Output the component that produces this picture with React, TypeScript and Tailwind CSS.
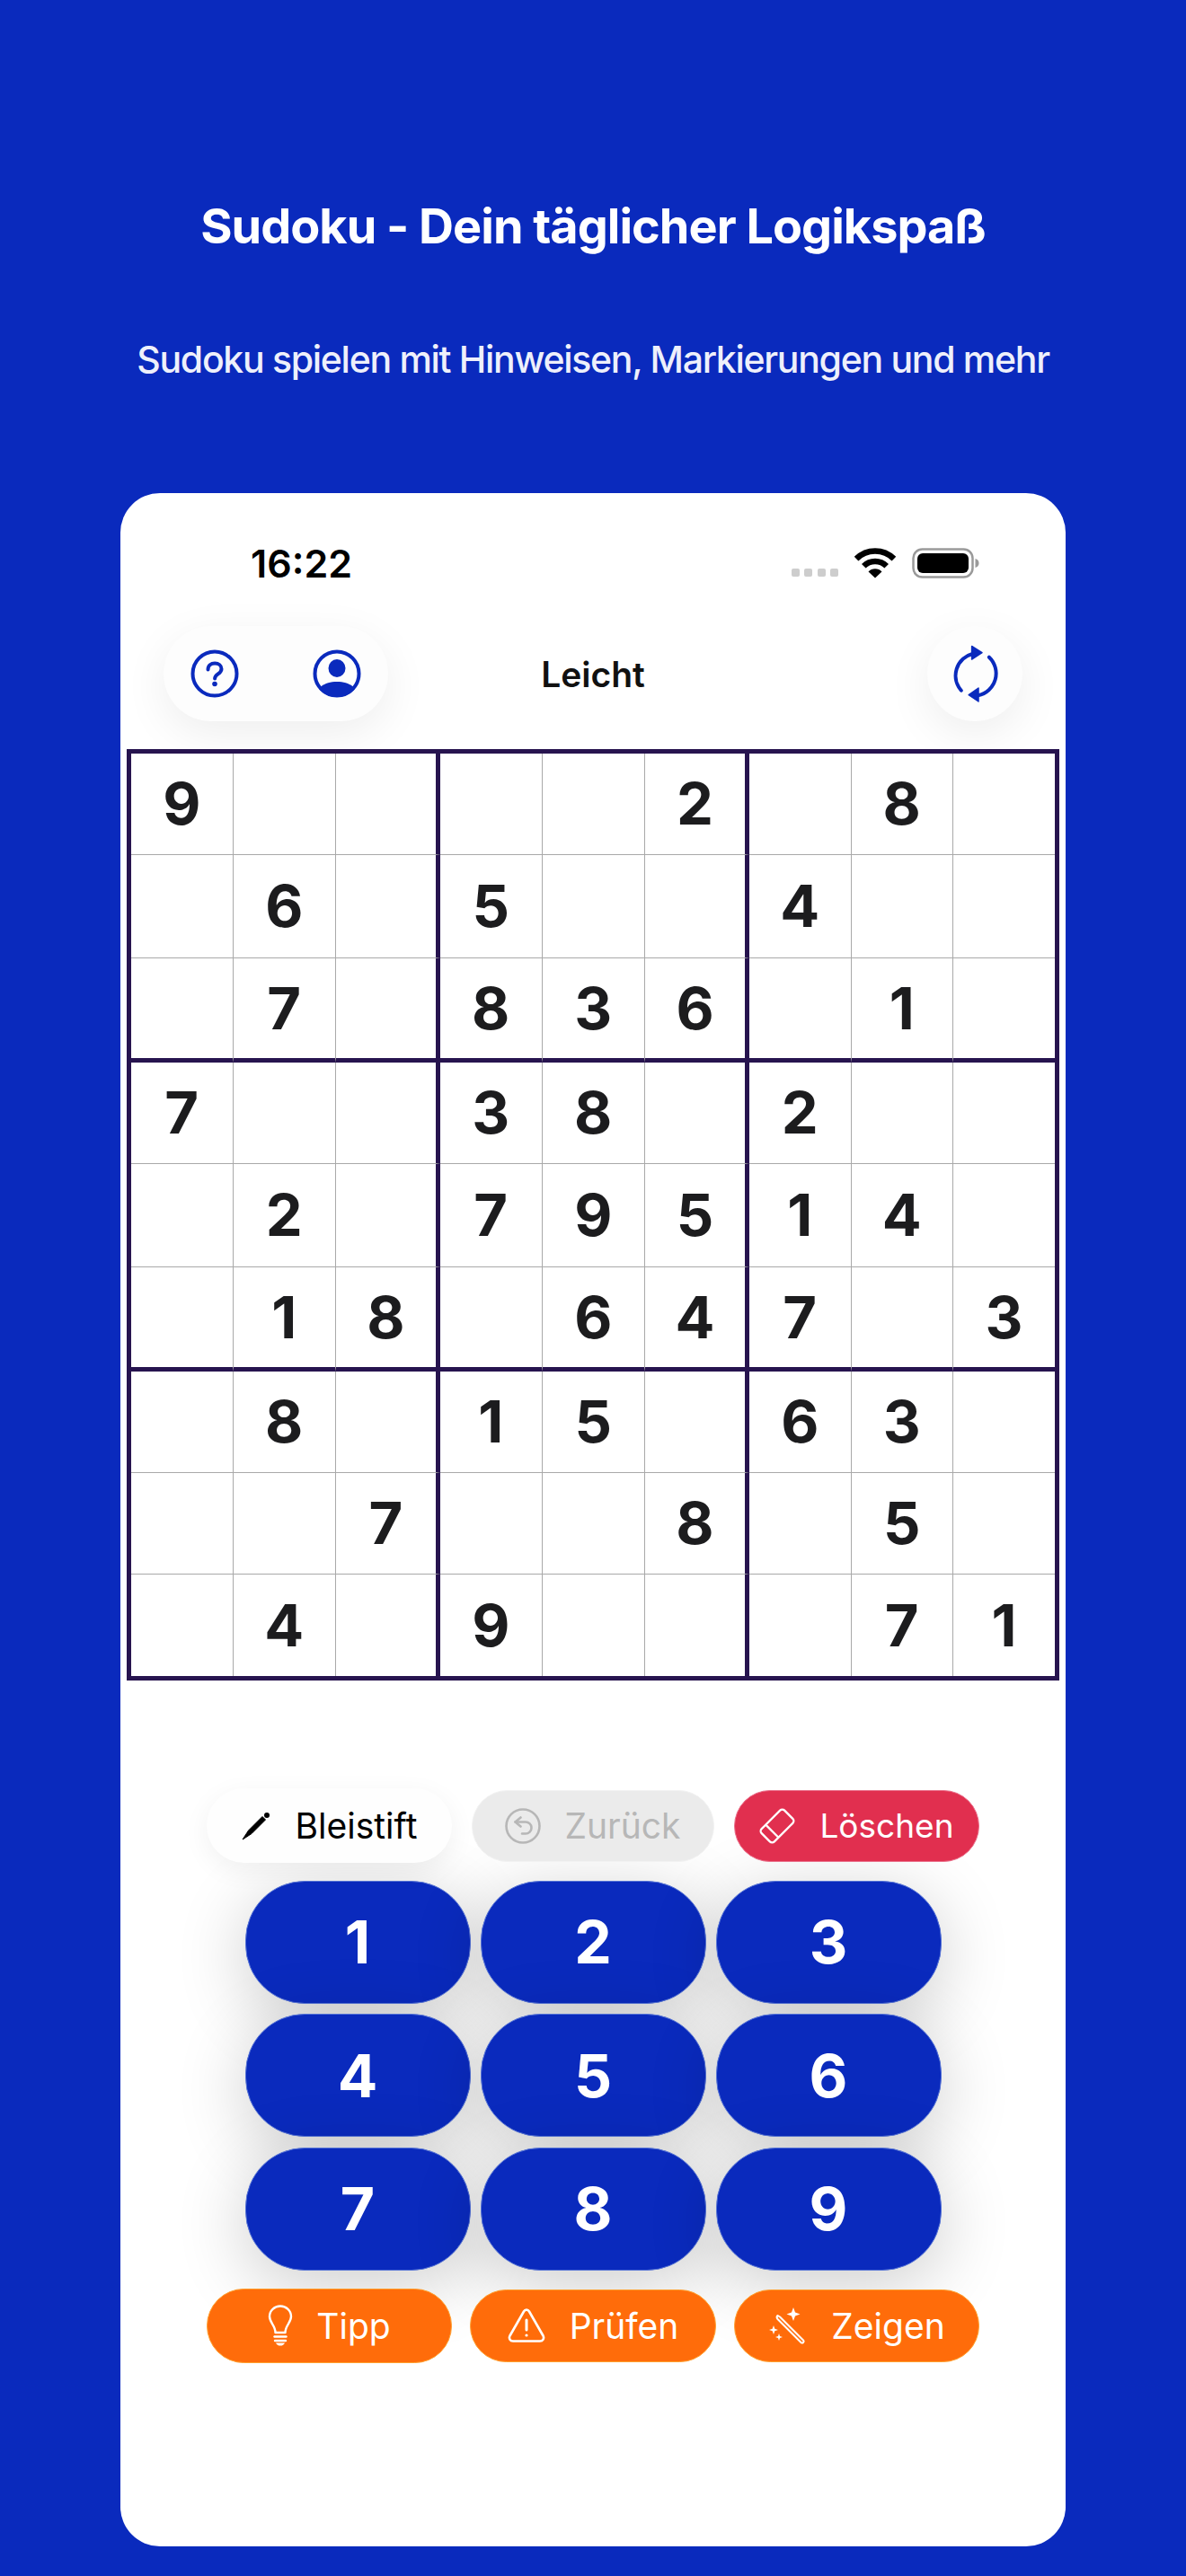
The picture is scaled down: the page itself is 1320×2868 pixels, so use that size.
import React from "react";

const BOARD = [
  "9....2.8.",
  ".6.5..4..",
  ".7.836.1.",
  "7..38.2..",
  ".2.79514.",
  ".18.647.3",
  ".8.15.63.",
  "..7..8.5.",
  ".4.9...71",
];

function HelpIcon() {
  return (
    <svg width="54" height="54" viewBox="0 0 54 54" fill="none">
      <circle cx="27" cy="27" r="24.5" stroke="#0a2abd" strokeWidth="4" />
      <path d="M19.500 22.500c0-4.500 3.400-7 7.600-7 4.200 0 7.400 2.600 7.400 6.200 0 5.800-7.400 5.600-7.400 10.800" stroke="#0a2abd" strokeWidth="4" strokeLinecap="round" />
      <circle cx="27" cy="38.500" r="2.800" fill="#0a2abd" />
    </svg>
  );
}

function UserIcon() {
  return (
    <svg width="54" height="54" viewBox="0 0 54 54" fill="none">
      <circle cx="27" cy="27" r="24.500" stroke="#0a2abd" strokeWidth="4" />
      <ellipse cx="27" cy="21" rx="9.500" ry="10" fill="#0a2abd" />
      <path d="M7 44c3-5 11-8 20-8s17 3 20 8c-5 6-12 9-20 9s-15-3-20-9z" fill="#0a2abd" />
    </svg>
  );
}

function RefreshIcon() {
  return (
    <svg width="62" height="66" viewBox="-31 -33 62 66" fill="none">
      <path d="M-15.200 18.700A25 25 0 0 1 -2.700 -22" stroke="#0a2abd" strokeWidth="4" strokeLinecap="round" />
      <path d="M-3.400 -30.500L8 -23.300L-3.400 -16Z" fill="#0a2abd" stroke="#0a2abd" strokeWidth="1.500" strokeLinejoin="round" />
      <path d="M15.900 -18.300A25 25 0 0 1 3.500 24.300" stroke="#0a2abd" strokeWidth="4" strokeLinecap="round" />
      <path d="M4 16L-6.800 23.700L4 31Z" fill="#0a2abd" stroke="#0a2abd" strokeWidth="1.500" strokeLinejoin="round" />
    </svg>
  );
}

function WifiIcon() {
  return (
    <svg width="46" height="34" viewBox="0 0 46 34" fill="none">
      <path d="M2.100 12.100A29.500 29.500 0 0 1 43.900 12.100" stroke="#000" strokeWidth="6.500" />
      <path d="M10.300 20.300A18 18 0 0 1 35.700 20.300" stroke="#000" strokeWidth="6.500" />
      <path d="M23 33.500L15.500 26.500A10.500 10.500 0 0 1 30.500 26.500Z" fill="#000" />
    </svg>
  );
}

function BatteryIcon() {
  return (
    <svg width="75" height="34" viewBox="0 0 75 34" fill="none">
      <rect x="1.500" y="1.500" width="66" height="31" rx="10" stroke="#9a9a9a" strokeWidth="2.500" />
      <rect x="6" y="6" width="57" height="22" rx="6" fill="#000" />
      <path d="M70.500 12c2.600.6 4 2.600 4 5s-1.400 4.400-4 5z" fill="#9a9a9a" />
    </svg>
  );
}

function PencilIcon() {
  return (
    <svg width="32" height="32" viewBox="0 0 32 32" fill="none">
      <path d="M7.500 21L23 5.500L26.500 9L11 24.500L1 31Z" fill="#000" stroke="#000" strokeWidth="1" strokeLinejoin="round" />
      <circle cx="28" cy="4" r="3" fill="#000" />
    </svg>
  );
}

function UndoIcon() {
  return (
    <svg width="40" height="40" viewBox="0 0 40 40" fill="none" stroke="#b7b7b7" strokeWidth="2.600" strokeLinecap="round" strokeLinejoin="round">
      <circle cx="20" cy="20" r="18.500" />
      <path d="M17.500 10.500L11.500 15.500L17.500 20.500" />
      <path d="M11.500 15.500H23a6.500 6.500 0 0 1 0 13H19" />
    </svg>
  );
}

function EraserIcon() {
  return (
    <svg width="40" height="40" viewBox="0 0 40 40" fill="none" stroke="#fff" strokeWidth="2.300">
      <g transform="rotate(-45 20 20)">
        <rect x="2" y="10" width="36" height="20" rx="3.500" />
        <path d="M12 10V30" />
      </g>
    </svg>
  );
}

function BulbIcon() {
  return (
    <svg width="28" height="46" viewBox="0 0 28 46" fill="none" stroke="#fff" strokeWidth="2.400" strokeLinecap="round">
      <path d="M8.500 31C8.500 23 2 20 2 13C2 6.500 7.500 1.500 14 1.500S26 6.500 26 13C26 20 19.500 23 19.500 31Z" strokeLinejoin="round" />
      <path d="M7.500 35.500H20.500" />
      <path d="M8 40H20" />
      <path d="M9 42.500H19C18.200 44.600 16.400 45.600 14 45.600S9.800 44.600 9 42.500Z" fill="#fff" strokeWidth="0" />
    </svg>
  );
}

function WarnIcon() {
  return (
    <svg width="42" height="38" viewBox="0 0 42 38" fill="none" stroke="#fff" strokeWidth="2.600" strokeLinecap="round" strokeLinejoin="round">
      <path d="M18 3.500C19.400 1 22.600 1 24 3.500L39.500 30.500C41 33.300 39.300 36.500 36 36.500H6C2.700 36.500 1 33.300 2.500 30.500Z" />
      <path d="M21 13V24" strokeWidth="3" />
      <circle cx="21" cy="30" r="1.600" fill="#fff" stroke="none" />
    </svg>
  );
}

function WandIcon() {
  return (
    <svg width="41" height="41" viewBox="0 0 41 41" fill="none">
      <path d="M10.500 9L13 10.500L39 36.500C39.800 37.400 39.800 38.300 39 39C38.300 39.800 37.400 39.800 36.500 39L10.500 13C9.500 11.800 9.500 10 10.500 9Z" stroke="#fff" strokeWidth="2" strokeLinejoin="round" />
      <path d="M28 0L30 5.500L35.500 7.500L30 9.500L28 15L26 9.500L20.500 7.500L26 5.500Z" fill="#fff" />
      <path d="M6 20L7.300 23.700L11 25L7.300 26.300L6 30L4.700 26.300L1 25L4.700 23.700Z" fill="#fff" />
      <path d="M12 29L13 32L16 33L13 34L12 37L11 34L8 33L11 32Z" fill="#fff" />
    </svg>
  );
}

function ActionButton({ className, gap, icon, label }: { className: string; gap: string; icon: React.ReactNode; label: string }) {
  return (
    <div className={`relative z-10 flex items-center justify-center rounded-full leading-none ${className}`}>
      <span className={`flex items-center ${gap}`}>
        {icon}
        <span>{label}</span>
      </span>
    </div>
  );
}

function Cell({ value, row, col }: { value: string; row: number; col: number }) {
  const right = col === 8 ? "" : col === 2 || col === 5 ? "border-r-[5px] border-r-[#27144f]" : "border-r-[1.5px] border-r-[#a9a9a9]";
  const bottom = row === 8 ? "" : row === 2 || row === 5 ? "border-b-[5px] border-b-[#27144f]" : "border-b-[1.5px] border-b-[#a9a9a9]";
  return (
    <div className={`flex items-center justify-center text-[65px] font-bold leading-none text-[#1c1c1e] ${right} ${bottom}`}>
      {value === "." ? "" : value}
    </div>
  );
}

export default function App() {
  return (
    <div className="flex h-[2868px] w-[1320px] flex-col items-center overflow-hidden bg-[#0a2abd] font-['Inter',sans-serif] text-white">
      <h1 className="mt-[222px] h-[60px] whitespace-nowrap text-[54px] font-bold leading-[60px] tracking-[-1px]">Sudoku - Dein täglicher Logikspaß</h1>
      <p className="mt-[93px] h-[50px] whitespace-nowrap text-[41px] font-medium leading-[50px] tracking-[-1.3px] text-[#eef0fb]">Sudoku spielen mit Hinweisen, Markierungen und mehr</p>

      <div className="mt-[124px] flex h-[2286px] w-[1052px] flex-col rounded-[44px] bg-white text-black">
        <div className="mt-[50px] flex h-[56px] items-center justify-between pr-[96px] pl-[145px]">
          <span className="text-[43px] font-semibold leading-none">16:22</span>
          <div className="flex items-end gap-[18px]">
            <div className="mb-[2px] flex gap-[5.5px]">
              <div className="h-[9px] w-[9px] rounded-[2px] bg-[#cdcdcd]" />
              <div className="h-[9px] w-[9px] rounded-[2px] bg-[#cdcdcd]" />
              <div className="h-[9px] w-[9px] rounded-[2px] bg-[#cdcdcd]" />
              <div className="h-[9px] w-[9px] rounded-[2px] bg-[#cdcdcd]" />
            </div>
            <WifiIcon />
            <BatteryIcon />
          </div>
        </div>

        <div className="mt-[42px] grid h-[106px] grid-cols-3 items-center px-[48px]">
          <div className="flex h-[106px] w-[250px] items-center justify-between rounded-full bg-[#fdfdfd] px-[30px] shadow-[0_14px_50px_rgba(0,0,0,0.07)]">
            <HelpIcon />
            <UserIcon />
          </div>
          <div className="text-center text-[39px] font-semibold leading-none text-[#111]">Leicht</div>
          <div className="flex h-[106px] w-[106px] items-center justify-center justify-self-end rounded-full bg-[#fdfdfd] shadow-[0_14px_50px_rgba(0,0,0,0.07)]">
            <RefreshIcon />
          </div>
        </div>

        <div className="mt-[30.5px] ml-[7px] grid h-[1037px] w-[1038px] shrink-0 grid-cols-[113.5px_114.5px_116px_113.5px_114.5px_116px_113.5px_113.5px_113px] grid-rows-[113.5px_114.5px_116px_113.5px_114.5px_116px_113px_113px_113px] border-[5px] border-[#27144f] bg-white">
          {BOARD.flatMap((line, r) => line.split("").map((v, c) => <Cell key={`${r}-${c}`} value={v} row={r} col={c} />))}
        </div>

        <div className="mt-[120px] flex flex-col items-center">
          <div className="flex h-[84px] w-[860px] items-center justify-between">
            <ActionButton className="h-[83px] w-[273px] bg-[#fefefe] text-[39px] text-black shadow-[0_8px_30px_rgba(0,0,0,0.06)]" gap="gap-[28px]" icon={<PencilIcon />} label="Bleistift" />
            <ActionButton className="h-[80px] w-[270px] border-[1.5px] border-[#f2f2f2] bg-[#ebebeb] text-[39px] text-[#b7b7b7]" gap="gap-[26px]" icon={<UndoIcon />} label="Zurück" />
            <ActionButton className="h-[80px] w-[273px] border-[1.5px] border-[#ea6f8a] bg-[#e12f4f] text-[37px] text-white" gap="gap-[27px]" icon={<EraserIcon />} label="Löschen" />
          </div>

          <div className="mt-[19px] grid grid-cols-3 gap-x-[11px] gap-y-[11.5px]">
            {["1", "2", "3", "4", "5", "6", "7", "8", "9"].map((n) => (
              <div
                key={n}
                className="flex h-[137px] w-[251px] items-center justify-center rounded-[66px] border-[1.5px] border-[#5674d6] bg-[#0a2abd] text-[66px] font-bold leading-none text-white shadow-[0_16px_80px_rgba(0,0,0,0.2)]"
              >
                {n}
              </div>
            ))}
          </div>

          <div className="mt-[19.5px] flex h-[84px] w-[860px] items-center justify-between">
            <ActionButton className="h-[83px] w-[273px] border-[1.5px] border-[#ffa02e] bg-[#ff6c0a] text-[39px] text-white" gap="gap-[26px]" icon={<BulbIcon />} label="Tipp" />
            <ActionButton className="h-[81px] w-[274px] border-[1.5px] border-[#ffa02e] bg-[#ff6c0a] text-[39px] text-white" gap="gap-[27px]" icon={<WarnIcon />} label="Prüfen" />
            <ActionButton className="h-[81px] w-[273px] border-[1.5px] border-[#ffa02e] bg-[#ff6c0a] text-[39px] text-white" gap="gap-[29px]" icon={<WandIcon />} label="Zeigen" />
          </div>
        </div>
      </div>
    </div>
  );
}
